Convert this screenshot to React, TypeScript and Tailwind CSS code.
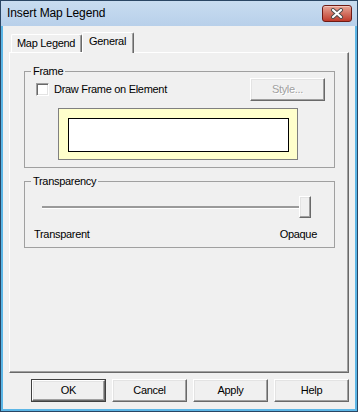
import React from "react";

function Btn({
  children,
  def,
  disabled,
}: {
  children: React.ReactNode;
  def?: boolean;
  disabled?: boolean;
}) {
  const bevel =
    "flex items-center justify-center bg-[#f0f0f0] border border-t-white border-l-white border-r-[#696969] border-b-[#696969] shadow-[inset_-1px_-1px_0_#a0a0a0,inset_1px_1px_0_#e3e3e3]";
  const label = disabled ? (
    <span className="text-[#a0a0a0] [text-shadow:1px_1px_0_#ffffff]">{children}</span>
  ) : (
    <span className="text-black">{children}</span>
  );
  if (def) {
    return (
      <div className="w-[75px] h-[23px] border border-[#404040] flex">
        <div className={bevel + " flex-1"}>{label}</div>
      </div>
    );
  }
  return <div className={bevel + " w-[75px] h-[23px]"}>{label}</div>;
}

function CloseButton() {
  return (
    <div className="w-[30px] h-[17px] rounded-[3px] border border-[#6e1a14] bg-gradient-to-b from-[#e8a597] via-[#d27060] to-[#c0392b] shadow-[inset_0_1px_0_#f3c6bb] flex items-center justify-center">
      <svg width="14" height="11" viewBox="0 0 14 11">
        <path d="M3 2 L11 9 M11 2 L3 9" stroke="#4a4a4a" strokeWidth="4" strokeLinecap="round" />
        <path d="M3 2 L11 9 M11 2 L3 9" stroke="#ffffff" strokeWidth="2.2" strokeLinecap="round" />
      </svg>
    </div>
  );
}

export default function App() {
  return (
    <div className="w-[358px] h-[412px] border border-[#2a4664] bg-[#bcd4ec] flex flex-col font-['Liberation_Sans',Arial,sans-serif] text-[11px] leading-[13px] tracking-[-0.3px] text-black">
      {/* Title bar */}
      <div className="h-[25px] shrink-0 flex items-center justify-between pl-[6px] pr-[5px] bg-gradient-to-b from-[#c8dcf0] to-[#b8d0ea]">
        <span className="text-[12px] leading-[15px] tracking-[-0.1px] text-black">Insert Map Legend</span>
        <CloseButton />
      </div>

      {/* Client */}
      <div className="flex-1 flex flex-col bg-[#f0f0f0] border-l-2 border-r-2 border-b-2 border-[#5cb6e6] px-[6px]">
        {/* Tab strip */}
        <div className="mt-[6px] h-[20px] flex items-end pl-[2px]">
          <div className="w-[71px] h-[18px] border border-b-0 border-t-white border-l-white border-r-[#696969] rounded-t-[2px] shadow-[inset_-1px_0_0_#a0a0a0] pl-[5px] pt-[2px]">
            Map Legend
          </div>
          <div className="relative z-10 -mb-px w-[52px] h-[21px] bg-[#f0f0f0] border border-b-0 border-t-white border-l-white border-r-[#696969] rounded-t-[2px] shadow-[inset_-1px_0_0_#a0a0a0] pl-[6px] pt-[2px]">
            General
          </div>
        </div>

        {/* Panel */}
        <div className="w-[340px] h-[321px] border border-t-white border-l-white border-r-[#696969] border-b-[#696969] shadow-[inset_-1px_-1px_0_#a0a0a0] pl-[14px] pt-[12px]">
          <fieldset className="w-[311px] border border-[#a0a0a0] pb-[7px]">
            <legend className="ml-[6px] px-[2px] leading-[13px]">Frame</legend>
            <div className="flex justify-between items-start pl-[11px] pr-[9px]">
              <div className="flex items-center gap-[5px] mt-[5px]">
                <div className="w-[13px] h-[13px] border border-t-[#a0a0a0] border-l-[#a0a0a0] border-r-white border-b-white bg-white shadow-[inset_1px_1px_0_#696969,inset_-1px_-1px_0_#e3e3e3]" />
                <span>Draw Frame on Element</span>
              </div>
              <Btn disabled>Style...</Btn>
            </div>
            <div className="ml-[33px] mt-[7px] w-[240px] h-[52px] border border-[#808080] bg-[#ffffcc] pl-[9px] pt-[9px]">
              <div className="w-[221px] h-[34px] border border-black bg-white" />
            </div>
          </fieldset>

          <fieldset className="w-[311px] mt-[7px] border border-[#a0a0a0] pb-[6px]">
            <legend className="ml-[6px] px-[2px] leading-[13px]">Transparency</legend>
            <div className="ml-[17px] mt-[8px] w-[269px] h-[22px] flex items-center">
              <div className="flex-1 h-[3px] border-t-2 border-t-[#9a9a9a] border-b border-b-white" />
              <div className="w-[12px] h-[22px] bg-[#f0f0f0] border border-t-white border-l-white border-r-[#696969] border-b-[#696969] shadow-[inset_-1px_-1px_0_#a0a0a0,inset_1px_1px_0_#e3e3e3]" />
            </div>
            <div className="mt-[10px] flex justify-between pl-[9px] pr-[17px]">
              <span>Transparent</span>
              <span>Opaque</span>
            </div>
          </fieldset>
        </div>

        {/* Buttons */}
        <div className="mt-[6px] flex justify-end gap-[6px]">
          <Btn def>OK</Btn>
          <Btn>Cancel</Btn>
          <Btn>Apply</Btn>
          <Btn>Help</Btn>
        </div>
      </div>
    </div>
  );
}
